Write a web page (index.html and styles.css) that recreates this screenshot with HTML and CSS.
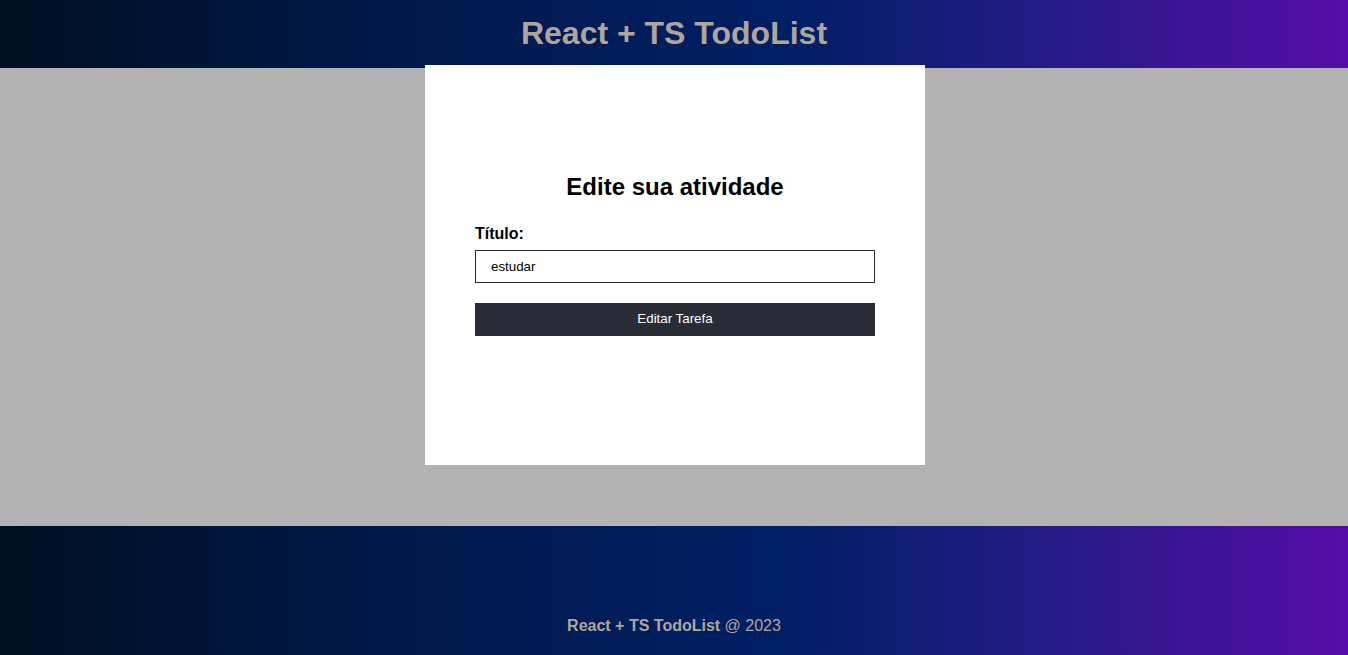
FILE: index.html
```html
<!DOCTYPE html>
<html lang="pt-BR">
<head>
<meta charset="utf-8">
<title>React + TS TodoList</title>
<link rel="stylesheet" href="styles.css">
</head>
<body>
<header class="header">
  <h1 class="header-title">React + TS TodoList</h1>
</header>
<main class="main">
  <div class="modal">
    <h2 class="modal-title">Edite sua atividade</h2>
    <form class="form">
      <label class="form-label" for="title">Título:</label>
      <input class="form-input" id="title" type="text" value="estudar">
      <button class="form-button" type="button">Editar Tarefa</button>
    </form>
  </div>
</main>
<footer class="footer">
  <p class="footer-text"><span class="footer-strong">React + TS TodoList</span> @ 2023</p>
</footer>
</body>
</html>
```
FILE: styles.css
```css
* { box-sizing: border-box; }
html, body { margin: 0; padding: 0; }
body {
  font-family: "Liberation Sans", Arial, sans-serif;
  width: 1348px;
  height: 655px;
  overflow: hidden;
}
.header, .footer {
  background: linear-gradient(to right, #010f22 0%, #00194b 30%, #001f64 58%, #241b86 78%, #560da8 100%);
}
.header {
  height: 68px;
  display: flex;
  align-items: center;
  justify-content: center;
  padding-bottom: 2px;
}
.header-title {
  margin: 0;
  font-size: 32px;
  font-weight: bold;
  color: #b0a59b;
  line-height: 1;
}
.main {
  position: relative;
  height: 458px;
  background: #b3b3b3;
}
.modal {
  position: absolute;
  left: 425px;
  top: -3px;
  width: 500px;
  height: 400px;
  background: #ffffff;
  padding: 108px 50px 0;
}
.modal-title {
  margin: 0;
  text-align: center;
  font-size: 24px;
  font-weight: bold;
  color: #000;
  line-height: 28px;
}
.form {
  display: flex;
  flex-direction: column;
  margin-top: 24px;
}
.form-label {
  font-size: 16px;
  font-weight: bold;
  line-height: 18px;
  color: #000;
}
.form-input {
  margin-top: 7px;
  height: 33px;
  border: 1px solid #282c34;
  padding: 0 15px;
  font-family: "Liberation Sans", Arial, sans-serif;
  font-size: 13.333px;
  color: #000;
  outline: none;
}
.form-button {
  margin-top: 20px;
  height: 33px;
  border: none;
  background: #282c34;
  color: #fff;
  font-family: "Liberation Sans", Arial, sans-serif;
  font-size: 13.333px;
  padding: 0 0 2px;
  cursor: pointer;
}
.footer {
  height: 129px;
  display: flex;
  align-items: flex-end;
  justify-content: center;
  padding-bottom: 20px;
}
.footer-text {
  margin: 0;
  font-size: 16px;
  color: #b0a59b;
  line-height: 18px;
}
.footer-strong { font-weight: bold; }
```
